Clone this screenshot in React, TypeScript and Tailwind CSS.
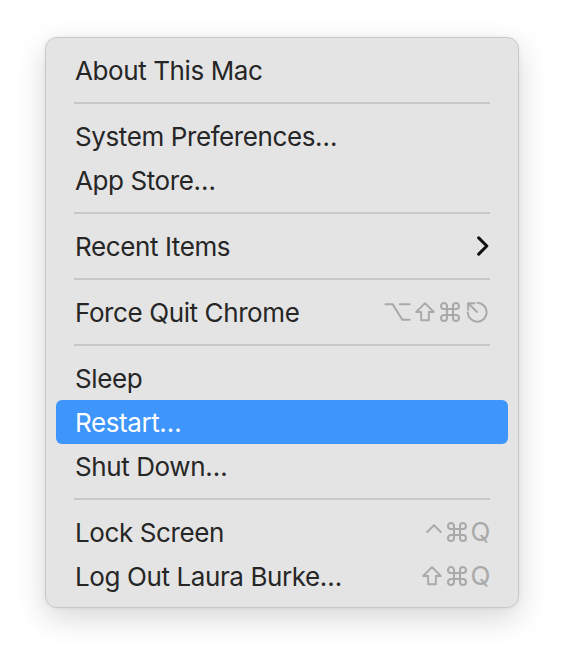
import { Fragment } from 'react';

type Item = {
  label: string;
  keys?: string[];
  submenu?: boolean;
  active?: boolean;
};

// menu groups, separated by a line
const groups: Item[][] = [
  [{ label: 'About This Mac' }],
  [{ label: 'System Preferences…' }, { label: 'App Store…' }],
  [{ label: 'Recent Items', submenu: true }],
  [{ label: 'Force Quit Chrome', keys: ['opt', 'shift', 'cmd', 'esc'] }],
  [{ label: 'Sleep' }, { label: 'Restart…', active: true }, { label: 'Shut Down…' }],
  [
    { label: 'Lock Screen', keys: ['ctrl', 'cmd', 'Q'] },
    { label: 'Log Out Laura Burke…', keys: ['shift', 'cmd', 'Q'] },
  ],
];

function Key({ k }: { k: string }) {
  const common = {
    fill: 'none',
    stroke: 'currentColor',
    strokeWidth: 1.7,
    strokeLinecap: 'round' as const,
    strokeLinejoin: 'round' as const,
  };
  if (k === 'opt')
    return (
      <svg viewBox="0 0 24 20" className="h-[24px] w-[29px]">
        <path d="M2 3.5h6l8 13h6M14 3.5h8" {...common} />
      </svg>
    );
  if (k === 'shift')
    return (
      <svg viewBox="0 0 20 20" className="h-[22px] w-[22px]">
        <path d="M10 2L2 10h4.5v7.5h7V10H18Z" {...common} />
      </svg>
    );
  if (k === 'cmd')
    return (
      <svg viewBox="0 0 20 20" className="h-[24px] w-[24px]">
        <path
          d="M7.5 7.5V5A2.5 2.5 0 1 0 5 7.5H15A2.5 2.5 0 1 0 12.5 5V15A2.5 2.5 0 1 0 15 12.5H5A2.5 2.5 0 1 0 7.5 15Z"
          {...common}
        />
      </svg>
    );
  if (k === 'esc')
    return (
      <svg viewBox="0 0 22 20" className="h-[24px] w-[26px]">
        <path d="M11.5 2.2A8 8 0 1 1 3.2 10.5" {...common} />
        <path d="M3.5 2.5l7.5 7.5M3.5 8V2.5H9" {...common} />
      </svg>
    );
  if (k === 'ctrl')
    return (
      <svg viewBox="0 0 16 20" className="h-[24px] w-[18px]">
        <path d="M2 10L8 4l6 6" {...common} />
      </svg>
    );
  return <span className="leading-none">{k}</span>;
}

export default function App() {
  return (
    <div
      className="min-h-screen bg-white pl-[45px] pt-[37px]"
      style={{ fontFamily: 'Inter, "Liberation Sans", sans-serif' }}
    >
      <div className="w-[474px] rounded-[12px] border border-[#c9c9c9] bg-[#e4e4e4] px-[10px] pb-[9px] pt-[10px] shadow-[0_10px_30px_rgba(0,0,0,0.16),0_0_4px_rgba(0,0,0,0.06)]">
        {groups.map((group, gi) => (
          <Fragment key={gi}>
            {gi > 0 && (
              <div className="flex h-[22px] items-center px-[18px]">
                <div className="h-[2px] w-full bg-[#c8c8c8]" />
              </div>
            )}
            {group.map((item) => (
              <div
                key={item.label}
                className={`flex h-[44px] items-center justify-between rounded-[6px] pl-[19px] pr-[18px] text-[26px] tracking-[-0.4px] ${
                  item.active ? 'bg-[#3e95fb] text-white' : 'text-[#262626]'
                }`}
              >
                <span>{item.label}</span>
                {item.keys && (
                  <span className="flex items-center gap-[2px] text-[#a9a9a9]">
                    {item.keys.map((k, i) => (
                      <Key key={i} k={k} />
                    ))}
                  </span>
                )}
                {item.submenu && (
                  <svg viewBox="0 0 12 20" className="mr-[1px] h-[22px] w-[13px]">
                    <path
                      d="M2.5 2.5l7.5 7.5-7.5 7.5"
                      fill="none"
                      stroke="#111"
                      strokeWidth={2.8}
                      strokeLinecap="round"
                      strokeLinejoin="round"
                    />
                  </svg>
                )}
              </div>
            ))}
          </Fragment>
        ))}
      </div>
    </div>
  );
}
